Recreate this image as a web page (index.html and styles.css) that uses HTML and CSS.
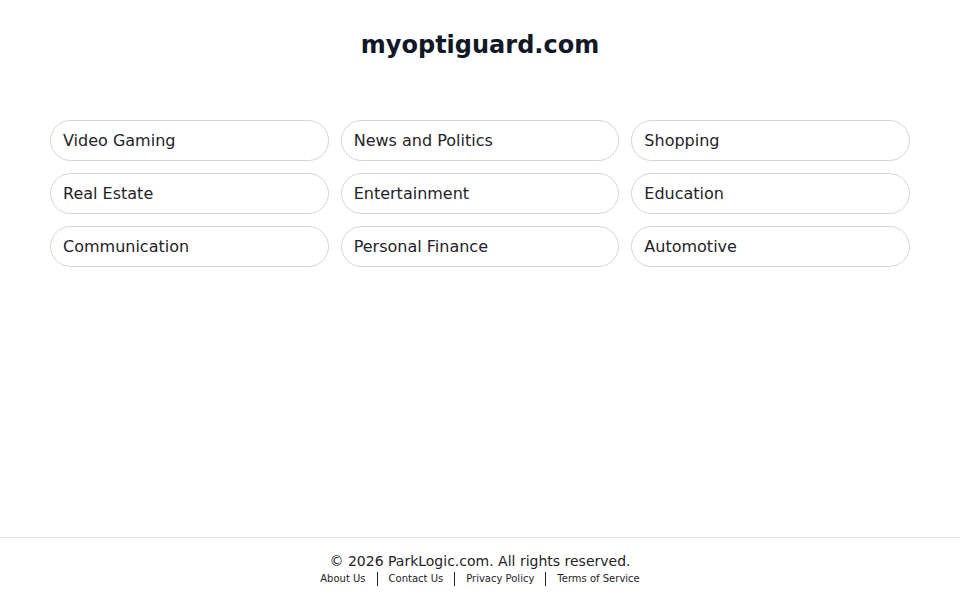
FILE: index.html
```html
<!DOCTYPE html>
<html lang="en">
<head>
    <meta charset="UTF-8">
    <meta name="viewport" content="width=device-width, initial-scale=1.0">
    <title>myoptiguard.com</title>
    <link rel="stylesheet" href="styles.css">
</head>
<body>
    <div class="page">
        <header class="site-header">
            <h1>myoptiguard.com</h1>
        </header>

        <main class="topics">
            <a class="topic" href="#">Video Gaming</a>
            <a class="topic" href="#">News and Politics</a>
            <a class="topic" href="#">Shopping</a>
            <a class="topic" href="#">Real Estate</a>
            <a class="topic" href="#">Entertainment</a>
            <a class="topic" href="#">Education</a>
            <a class="topic" href="#">Communication</a>
            <a class="topic" href="#">Personal Finance</a>
            <a class="topic" href="#">Automotive</a>
        </main>

        <footer class="site-footer">
            <p class="copy">&copy; 2026 ParkLogic.com. All rights reserved.</p>
            <nav class="footer-links">
                <a href="#">About Us</a>
                <span class="sep"></span>
                <a href="#">Contact Us</a>
                <span class="sep"></span>
                <a href="#">Privacy Policy</a>
                <span class="sep"></span>
                <a href="#">Terms of Service</a>
            </nav>
        </footer>
    </div>
</body>
</html>
```

FILE: styles.css
```css
/* Global */
body {
    margin: 0;
    font-family: "DejaVu Sans", sans-serif;
    background: #fff;
    color: #1f2328;
}

.page {
    min-height: 600px;
    display: flex;
    flex-direction: column;
}

/* Header */
.site-header {
    text-align: center;
    padding-top: 30px;
}

.site-header h1 {
    margin: 0;
    font-size: 24px;
    line-height: 30px;
    font-weight: bold;
    color: #111827;
}

/* Topic grid */
.topics {
    display: grid;
    grid-template-columns: repeat(3, 1fr);
    gap: 12px;
    margin: 60px 50px 0;
    flex: 1;
    align-content: start;
}

.topic {
    display: block;
    height: 39px;
    line-height: 39px;
    padding: 0 12px;
    border: 1px solid #d1d5db;
    border-radius: 21px;
    font-size: 16px;
    color: #1f2328;
    text-decoration: none;
}

/* Footer */
.site-footer {
    border-top: 1px solid #e5e7eb;
    padding: 14px 0 14px;
    text-align: center;
}

.copy {
    margin: 0;
    font-size: 14px;
    line-height: 18px;
    color: #1f2328;
}

.footer-links {
    display: flex;
    justify-content: center;
    align-items: center;
    gap: 11px;
    font-size: 10px;
    line-height: 14px;
    margin-top: 2px;
}

.footer-links a {
    color: #1f2328;
    text-decoration: none;
}

.sep {
    width: 1px;
    height: 14px;
    background: #1f2328;
}
```
